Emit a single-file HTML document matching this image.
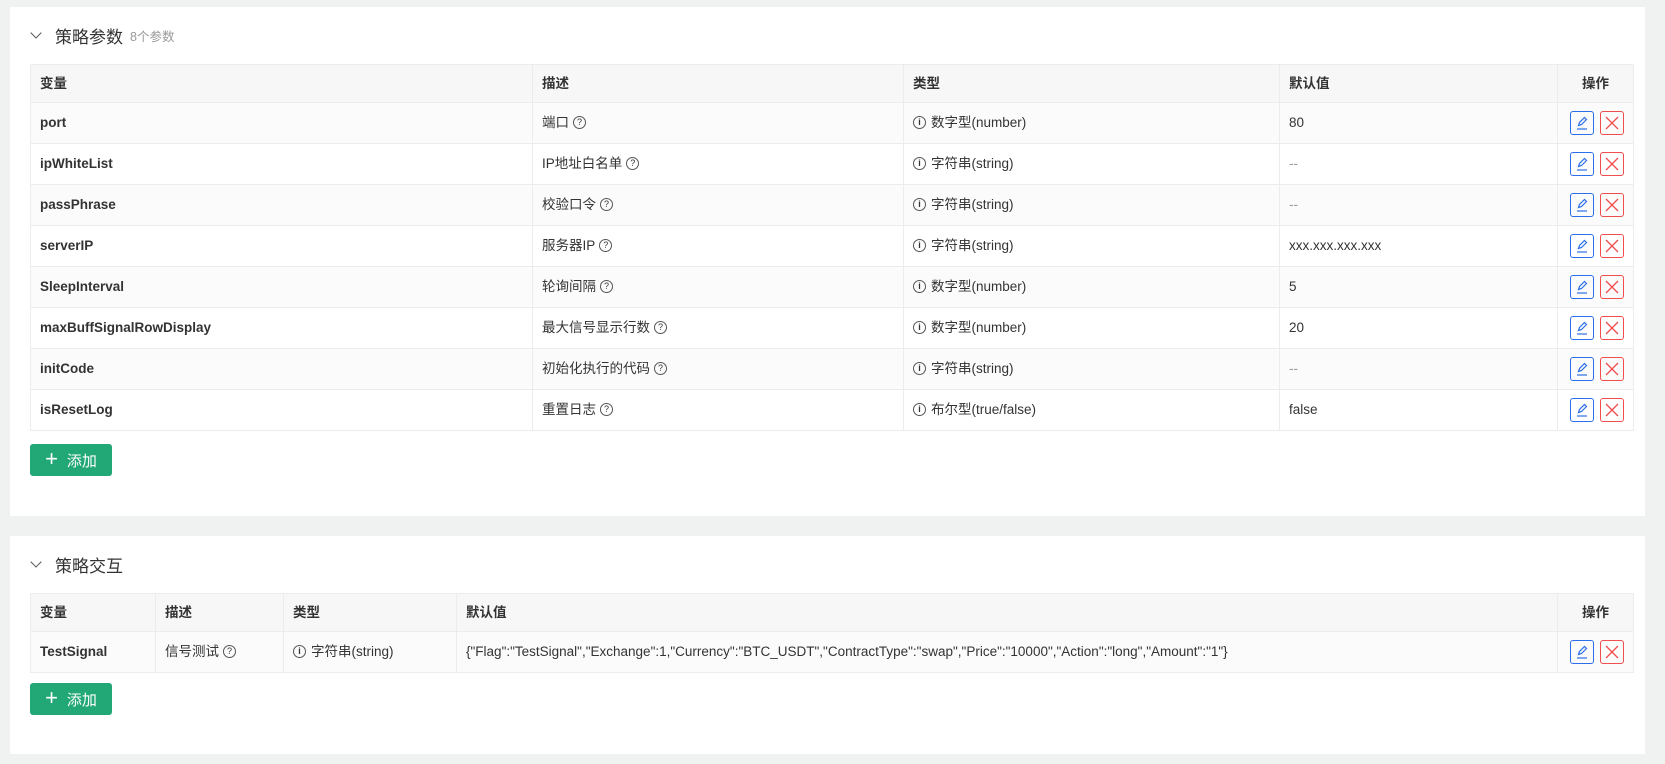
<!DOCTYPE html>
<html><head><meta charset="utf-8"><style>
*{box-sizing:border-box;margin:0;padding:0}
body{width:1665px;height:764px;background:#f0f2f2;font-family:"Liberation Sans","Noto Sans CJK SC",sans-serif;font-size:13.5px;color:#333;position:relative;overflow:hidden}
.card{position:absolute;left:10px;width:1635px;background:#fff}
.title{position:absolute;left:20px;display:flex;align-items:center;font-size:17px;color:#333;height:24px}
.title .chev{width:8px;height:8px;border-right:1.3px solid #555;border-bottom:1.3px solid #555;transform:rotate(45deg);margin:0 15px 4px 2px}
.title small{font-size:12.5px;color:#999;margin-left:7px}
table{position:absolute;left:20px;width:1604px;border-collapse:collapse;table-layout:fixed;border:1px solid #e8e8e8}
th,td{border:1px solid #ececec;padding:0 9px;text-align:left;white-space:nowrap;overflow:hidden;vertical-align:middle;line-height:18px}
th{background:#f7f7f7;font-weight:600;height:38px;color:#333}
td{height:41px}
tr:nth-child(even) td{background:#fbfbfb}
td.v{font-weight:bold}
.q,.i{display:inline-block;width:13px;height:13px;border:1px solid #555;border-radius:50%;font-size:9px;line-height:11px;text-align:center;vertical-align:middle;position:relative;top:-1px}
.q{margin-left:4px}
.i{margin-right:5px;font-weight:bold}
.ops{text-align:center}
.b{display:inline-block;width:24px;height:24px;border:1px solid;border-radius:3px;vertical-align:middle;margin:0 3px;position:relative}
.e{border-color:#2a6fe8}.d{border-color:#f04d4d}
.btn{position:absolute;left:20px;width:82px;height:32px;background:#22a877;border-radius:3px;color:#fff;font-size:15px;display:flex;align-items:center;justify-content:center}
.btn span{font-size:22px;font-weight:300;margin-right:9px;line-height:1;position:relative;top:-1px}
</style></head><body>
<div class="card" style="top:7px;height:509px">
<div class="title" style="top:16px"><i class="chev"></i>策略参数<small>8个参数</small></div>
<table style="top:57px">
<colgroup><col style="width:502px"><col style="width:371px"><col style="width:376px"><col style="width:278px"><col></colgroup>
<tr><th>变量</th><th>描述</th><th>类型</th><th>默认值</th><th style="text-align:center">操作</th></tr>
<tr><td class="v">port</td><td>端口<span class="q">?</span></td><td><span class="i">i</span>数字型(number)</td><td>80</td><td class="ops">OPS</td></tr>
<tr><td class="v">ipWhiteList</td><td>IP地址白名单<span class="q">?</span></td><td><span class="i">i</span>字符串(string)</td><td style="color:#999">--</td><td class="ops">OPS</td></tr>
<tr><td class="v">passPhrase</td><td>校验口令<span class="q">?</span></td><td><span class="i">i</span>字符串(string)</td><td style="color:#999">--</td><td class="ops">OPS</td></tr>
<tr><td class="v">serverIP</td><td>服务器IP<span class="q">?</span></td><td><span class="i">i</span>字符串(string)</td><td>xxx.xxx.xxx.xxx</td><td class="ops">OPS</td></tr>
<tr><td class="v">SleepInterval</td><td>轮询间隔<span class="q">?</span></td><td><span class="i">i</span>数字型(number)</td><td>5</td><td class="ops">OPS</td></tr>
<tr><td class="v">maxBuffSignalRowDisplay</td><td>最大信号显示行数<span class="q">?</span></td><td><span class="i">i</span>数字型(number)</td><td>20</td><td class="ops">OPS</td></tr>
<tr><td class="v">initCode</td><td>初始化执行的代码<span class="q">?</span></td><td><span class="i">i</span>字符串(string)</td><td style="color:#999">--</td><td class="ops">OPS</td></tr>
<tr><td class="v">isResetLog</td><td>重置日志<span class="q">?</span></td><td><span class="i">i</span>布尔型(true/false)</td><td>false</td><td class="ops">OPS</td></tr>
</table>
<div class="btn" style="top:437px"><span>+</span>添加</div>
</div>
<div class="card" style="top:536px;height:218px">
<div class="title" style="top:16px"><i class="chev"></i>策略交互</div>
<table style="top:57px">
<colgroup><col style="width:125px"><col style="width:128px"><col style="width:173px"><col style="width:1101px"><col></colgroup>
<tr><th>变量</th><th>描述</th><th>类型</th><th>默认值</th><th style="text-align:center">操作</th></tr>
<tr><td class="v">TestSignal</td><td>信号测试<span class="q">?</span></td><td><span class="i">i</span>字符串(string)</td><td>{"Flag":"TestSignal","Exchange":1,"Currency":"BTC_USDT","ContractType":"swap","Price":"10000","Action":"long","Amount":"1"}</td><td class="ops">OPS</td></tr>
</table>
<div class="btn" style="top:147px"><span>+</span>添加</div>
</div>
<script>
var h='<span class="b e"><svg width="22" height="22" viewBox="0 0 22 22" style="position:absolute;left:0;top:0"><path d="M7.5 13.5l1-3 5-5 2 2-5 5z" fill="none" stroke="#2a6fe8" stroke-width="1.2"/><path d="M6 17h10" stroke="#2a6fe8" stroke-width="1.2"/></svg></span><span class="b d"><svg width="22" height="22" viewBox="0 0 22 22" style="position:absolute;left:0;top:0"><path d="M5 5l12 12M17 5L5 17" stroke="#f04d4d" stroke-width="1.3"/></svg></span>';
document.querySelectorAll('.ops').forEach(function(e){if(e.tagName=='TD')e.innerHTML=h;});
</script>
</body></html>
